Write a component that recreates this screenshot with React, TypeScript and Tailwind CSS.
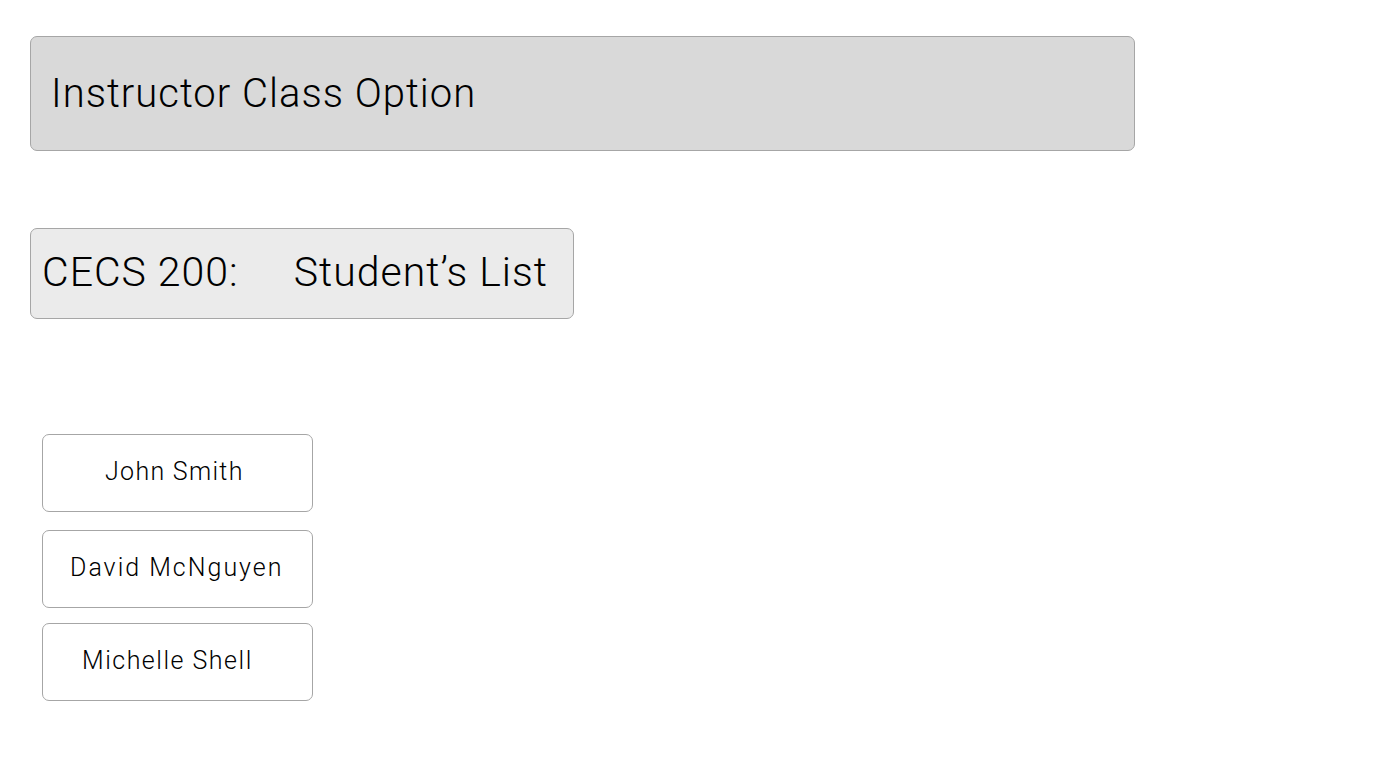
import React from "react"

const font = { fontFamily: "Roboto, 'Liberation Sans', sans-serif" }

const students = [
  { name: "John Smith", pad: "pl-[62px] tracking-[1.3px]" },
  { name: "David McNguyen", pad: "pl-[27px] tracking-[2px]" },
  { name: "Michelle Shell", pad: "pl-[39px] tracking-[1.5px]" },
]

export default function App() {
  return (
    <div className="min-h-[772px] w-[1400px] bg-white pl-[30px] pt-[36px] text-black font-light" style={font}>
      <div className="flex h-[115px] w-[1105px] items-center rounded-[7px] border border-[#a6a6a6] bg-[#d9d9d9] pl-[20px]">
        <span className="text-[40px] leading-none tracking-[1px]">Instructor Class Option</span>
      </div>

      <div className="mt-[77px] flex h-[91px] w-[544px] items-center rounded-[7px] border border-[#a6a6a6] bg-[#ebebeb] pb-[3px] pl-[11px]">
        <span className="text-[41px] leading-none tracking-[1px] whitespace-pre">CECS 200:     Student’s List</span>
      </div>

      <div className="ml-[12px] mt-[115px] flex flex-col">
        {students.map((s, i) => (
          <div
            key={s.name}
            className={
              "flex h-[78px] w-[271px] items-center rounded-[7px] border border-[#a6a6a6] bg-white pb-[3px] " +
              s.pad +
              (i === 1 ? " mt-[18px]" : i === 2 ? " mt-[15px]" : "")
            }
          >
            <span className="text-[25px] leading-none">{s.name}</span>
          </div>
        ))}
      </div>
    </div>
  )
}
